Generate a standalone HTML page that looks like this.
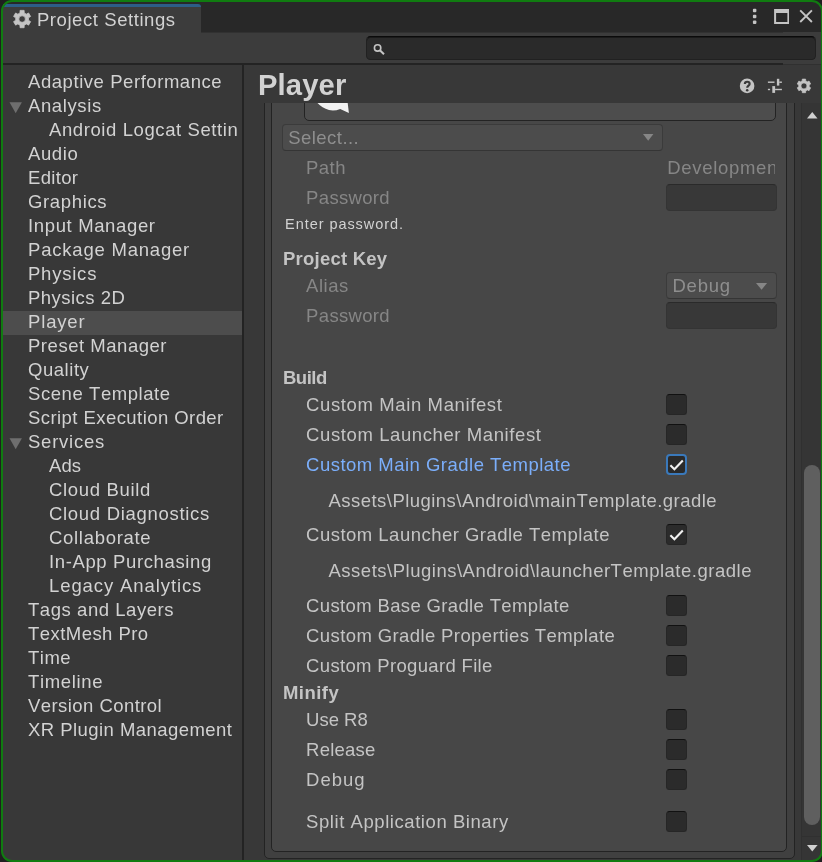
<!DOCTYPE html>
<html><head><meta charset="utf-8"><title>Project Settings</title><style>
html,body{margin:0;padding:0;width:822px;height:862px;overflow:hidden;background:#1f1f1f;}
body{font-family:"Liberation Sans",sans-serif;font-kerning:none;}
#w{position:absolute;left:1px;top:0;width:822px;height:862px;box-sizing:border-box;border-radius:11px;overflow:hidden;}
#in{will-change:transform;position:absolute;left:-1px;top:0;width:823px;height:862px;}
#bd{position:absolute;left:1px;top:0;width:822px;height:862px;box-sizing:border-box;border:2px solid #107c10;border-radius:11px;}
.t{position:absolute;height:24px;line-height:24px;white-space:pre;}
</style></head>
<body><div id="w"><div id="in">
<div style="position:absolute;left:3px;top:2px;width:818px;height:30px;background:#282828;"></div>
<div style="position:absolute;left:3px;top:32px;width:818px;height:33px;background:#3c3c3c;"></div>
<div style="position:absolute;left:201px;top:32px;width:582px;height:1px;background:#313131;"></div>
<div style="position:absolute;left:3px;top:4px;width:198px;height:29px;background:#3c3c3c;border-top:3px solid #2c5d87;box-sizing:border-box;border-top-right-radius:3px;"></div>
<div style="position:absolute;left:3px;top:63px;width:780px;height:2px;background:#232323;"></div>
<div style="position:absolute;left:783px;top:64px;width:38px;height:1px;background:#303030;"></div>
<div style="position:absolute;left:366px;top:36px;width:450px;height:24px;background:#2a2a2a;box-sizing:border-box;border:1px solid #212121;border-top-color:#0a0a0a;border-radius:4.5px;box-shadow:inset 0 1px 0 #1a1a1a;"></div>
<div style="position:absolute;left:3px;top:65px;width:239px;height:795px;background:#383838;"></div>
<div style="position:absolute;left:3px;top:311px;width:239px;height:24px;background:#4d4d4d;"></div>
<div style="position:absolute;left:242px;top:65px;width:2px;height:795px;background:#232323;"></div>
<div style="position:absolute;left:244px;top:65px;width:577px;height:795px;background:#383838;"></div>
<div style="position:absolute;left:244px;top:103px;width:557px;height:757px;overflow:hidden"><div style="position:absolute;left:20px;top:-20px;width:531px;height:776px;background:#404040;box-sizing:border-box;border:1px solid #232323;border-radius:5px;"></div><div style="position:absolute;left:27px;top:-20px;width:516px;height:769px;background:#474747;box-sizing:border-box;border:1px solid #232323;border-radius:5px;"></div><div style="position:absolute;left:60px;top:-20px;width:472px;height:38px;background:#4d4d4d;box-sizing:border-box;border:1px solid #232323;border-radius:5px;"></div></div>
<div style="position:absolute;left:801px;top:103px;width:20px;height:757px;background:#353535;"></div>
<div style="position:absolute;left:804px;top:465px;width:16px;height:360px;background:#5f5f5f;border-radius:8px;"></div>
<div style="position:absolute;left:801px;top:103px;width:1px;height:757px;background:#303030;"></div>
<div style="position:absolute;left:802px;top:836px;width:19px;height:1px;background:#303030;"></div>
<div style="position:absolute;left:282px;top:124px;width:381px;height:27px;background:#4c4c4c;box-sizing:border-box;border:1px solid #3b3b3b;border-bottom-color:#353535;border-radius:4px;"></div>
<div style="position:absolute;left:666px;top:184px;width:111px;height:27px;background:#383838;box-sizing:border-box;border:1px solid #343434;border-top-color:#2a2a2a;border-radius:4px;"></div>
<div style="position:absolute;left:666px;top:272px;width:111px;height:27px;background:#4c4c4c;box-sizing:border-box;border:1px solid #3b3b3b;border-bottom-color:#353535;border-radius:4px;"></div>
<div style="position:absolute;left:666px;top:302px;width:111px;height:27px;background:#383838;box-sizing:border-box;border:1px solid #343434;border-top-color:#2a2a2a;border-radius:4px;"></div>
<div style="position:absolute;left:666px;top:394px;width:21px;height:21px;background:#2b2b2b;box-sizing:border-box;border:1px solid #262626;border-top:1.5px solid #111;border-radius:3.5px;"></div>
<div style="position:absolute;left:666px;top:424px;width:21px;height:21px;background:#2b2b2b;box-sizing:border-box;border:1px solid #262626;border-top:1.5px solid #111;border-radius:3.5px;"></div>
<div style="position:absolute;left:666px;top:454px;width:21px;height:21px;background:#2a2a2a;box-sizing:border-box;border:2px solid #3a79bb;border-radius:4px;"></div>
<svg style="position:absolute;left:666px;top:454px" width="21" height="21" viewBox="0 0 21 21"><path d="M4.4 11.2 L8.4 15.2 L16.8 6.5" fill="none" stroke="#f0f0f0" stroke-width="2.1"/></svg>
<div style="position:absolute;left:666px;top:524px;width:21px;height:21px;background:#2b2b2b;box-sizing:border-box;border:1px solid #262626;border-top:1.5px solid #111;border-radius:3.5px;"></div>
<svg style="position:absolute;left:666px;top:524px" width="21" height="21" viewBox="0 0 21 21"><path d="M4.4 11.2 L8.4 15.2 L16.8 6.5" fill="none" stroke="#f0f0f0" stroke-width="2.1"/></svg>
<div style="position:absolute;left:666px;top:595px;width:21px;height:21px;background:#2b2b2b;box-sizing:border-box;border:1px solid #262626;border-top:1.5px solid #111;border-radius:3.5px;"></div>
<div style="position:absolute;left:666px;top:625px;width:21px;height:21px;background:#2b2b2b;box-sizing:border-box;border:1px solid #262626;border-top:1.5px solid #111;border-radius:3.5px;"></div>
<div style="position:absolute;left:666px;top:655px;width:21px;height:21px;background:#2b2b2b;box-sizing:border-box;border:1px solid #262626;border-top:1.5px solid #111;border-radius:3.5px;"></div>
<div style="position:absolute;left:666px;top:709px;width:21px;height:21px;background:#2b2b2b;box-sizing:border-box;border:1px solid #262626;border-top:1.5px solid #111;border-radius:3.5px;"></div>
<div style="position:absolute;left:666px;top:739px;width:21px;height:21px;background:#2b2b2b;box-sizing:border-box;border:1px solid #262626;border-top:1.5px solid #111;border-radius:3.5px;"></div>
<div style="position:absolute;left:666px;top:769px;width:21px;height:21px;background:#2b2b2b;box-sizing:border-box;border:1px solid #262626;border-top:1.5px solid #111;border-radius:3.5px;"></div>
<div style="position:absolute;left:666px;top:811px;width:21px;height:21px;background:#2b2b2b;box-sizing:border-box;border:1px solid #262626;border-top:1.5px solid #111;border-radius:3.5px;"></div>
<div class="t" style="left:36.90px;top:8.29px;font-size:18.5px;letter-spacing:0.576px;color:#d2d2d2;">Project Settings</div>
<div class="t" style="left:28.00px;top:70.39px;font-size:18.5px;letter-spacing:0.559px;color:#d2d2d2;">Adaptive Performance</div>
<div class="t" style="left:28.00px;top:94.39px;font-size:18.5px;letter-spacing:0.607px;color:#d2d2d2;">Analysis</div>
<div class="t" style="left:49px;top:118.39px;width:189px;overflow:hidden;font-size:18.5px;letter-spacing:0.594px;color:#d2d2d2;text-indent:0.00px;">Android Logcat Settings</div>
<div class="t" style="left:28.00px;top:142.39px;font-size:18.5px;letter-spacing:0.591px;color:#d2d2d2;">Audio</div>
<div class="t" style="left:28.00px;top:166.39px;font-size:18.5px;letter-spacing:0.338px;color:#d2d2d2;">Editor</div>
<div class="t" style="left:28.00px;top:190.39px;font-size:18.5px;letter-spacing:0.650px;color:#d2d2d2;">Graphics</div>
<div class="t" style="left:28.00px;top:214.39px;font-size:18.5px;letter-spacing:0.641px;color:#d2d2d2;">Input Manager</div>
<div class="t" style="left:28.00px;top:238.39px;font-size:18.5px;letter-spacing:0.795px;color:#d2d2d2;">Package Manager</div>
<div class="t" style="left:28.00px;top:262.39px;font-size:18.5px;letter-spacing:0.775px;color:#d2d2d2;">Physics</div>
<div class="t" style="left:28.00px;top:286.39px;font-size:18.5px;letter-spacing:0.469px;color:#d2d2d2;">Physics 2D</div>
<div class="t" style="left:28.00px;top:310.39px;font-size:18.5px;letter-spacing:0.838px;color:#d2d2d2;">Player</div>
<div class="t" style="left:28.00px;top:334.39px;font-size:18.5px;letter-spacing:0.531px;color:#d2d2d2;">Preset Manager</div>
<div class="t" style="left:28.00px;top:358.39px;font-size:18.5px;letter-spacing:0.543px;color:#d2d2d2;">Quality</div>
<div class="t" style="left:28.00px;top:382.39px;font-size:18.5px;letter-spacing:0.570px;color:#d2d2d2;">Scene Template</div>
<div class="t" style="left:28.00px;top:406.39px;font-size:18.5px;letter-spacing:0.435px;color:#d2d2d2;">Script Execution Order</div>
<div class="t" style="left:28.00px;top:430.39px;font-size:18.5px;letter-spacing:0.750px;color:#d2d2d2;">Services</div>
<div class="t" style="left:49.00px;top:454.39px;font-size:18.5px;letter-spacing:0.075px;color:#d2d2d2;">Ads</div>
<div class="t" style="left:49.00px;top:478.39px;font-size:18.5px;letter-spacing:0.673px;color:#d2d2d2;">Cloud Build</div>
<div class="t" style="left:49.00px;top:502.39px;font-size:18.5px;letter-spacing:0.697px;color:#d2d2d2;">Cloud Diagnostics</div>
<div class="t" style="left:49.00px;top:526.39px;font-size:18.5px;letter-spacing:0.702px;color:#d2d2d2;">Collaborate</div>
<div class="t" style="left:49.00px;top:550.39px;font-size:18.5px;letter-spacing:0.627px;color:#d2d2d2;">In-App Purchasing</div>
<div class="t" style="left:49.00px;top:574.39px;font-size:18.5px;letter-spacing:0.903px;color:#d2d2d2;">Legacy Analytics</div>
<div class="t" style="left:28.00px;top:598.39px;font-size:18.5px;letter-spacing:0.554px;color:#d2d2d2;">Tags and Layers</div>
<div class="t" style="left:28.00px;top:622.39px;font-size:18.5px;letter-spacing:0.454px;color:#d2d2d2;">TextMesh Pro</div>
<div class="t" style="left:28.00px;top:646.39px;font-size:18.5px;letter-spacing:0.507px;color:#d2d2d2;">Time</div>
<div class="t" style="left:28.00px;top:670.39px;font-size:18.5px;letter-spacing:0.659px;color:#d2d2d2;">Timeline</div>
<div class="t" style="left:28.00px;top:694.39px;font-size:18.5px;letter-spacing:0.441px;color:#d2d2d2;">Version Control</div>
<div class="t" style="left:28.00px;top:718.39px;font-size:18.5px;letter-spacing:0.450px;color:#d2d2d2;">XR Plugin Management</div>
<div class="t" style="left:258.00px;top:72.68px;font-size:29.2px;letter-spacing:0.130px;color:#d2d2d2;font-weight:700;">Player</div>
<div class="t" style="left:288.20px;top:126.29px;font-size:18.5px;letter-spacing:0.465px;color:#8e8e8e;">Select...</div>
<div class="t" style="left:306.10px;top:156.29px;font-size:18.5px;letter-spacing:0.439px;color:#868686;">Path</div>
<div class="t" style="left:660px;top:156.29px;width:115px;overflow:hidden;font-size:18.5px;letter-spacing:0.677px;color:#868686;text-indent:7.30px;">Development Keystore</div>
<div class="t" style="left:306.10px;top:186.09px;font-size:18.5px;letter-spacing:0.332px;color:#868686;">Password</div>
<div class="t" style="left:285.10px;top:212.48px;font-size:14.5px;letter-spacing:0.935px;color:#d2d2d2;">Enter password.</div>
<div class="t" style="left:283.00px;top:246.69px;font-size:18.5px;letter-spacing:0.236px;color:#c4c4c4;font-weight:700;">Project Key</div>
<div class="t" style="left:306.10px;top:273.69px;font-size:18.5px;letter-spacing:0.537px;color:#868686;">Alias</div>
<div class="t" style="left:672.50px;top:273.69px;font-size:18.5px;letter-spacing:0.757px;color:#8e8e8e;">Debug</div>
<div class="t" style="left:306.10px;top:304.49px;font-size:18.5px;letter-spacing:0.332px;color:#868686;">Password</div>
<div class="t" style="left:283.00px;top:366.49px;font-size:18.5px;letter-spacing:-0.488px;color:#c4c4c4;font-weight:700;">Build</div>
<div class="t" style="left:306.10px;top:393.29px;font-size:18.5px;letter-spacing:0.617px;color:#c4c4c4;">Custom Main Manifest</div>
<div class="t" style="left:306.10px;top:423.29px;font-size:18.5px;letter-spacing:0.597px;color:#c4c4c4;">Custom Launcher Manifest</div>
<div class="t" style="left:306.10px;top:453.09px;font-size:18.5px;letter-spacing:0.481px;color:#7baefa;">Custom Main Gradle Template</div>
<div class="t" style="left:328.50px;top:489.09px;font-size:18.5px;letter-spacing:0.461px;color:#c4c4c4;">Assets\Plugins\Android\mainTemplate.gradle</div>
<div class="t" style="left:306.10px;top:523.29px;font-size:18.5px;letter-spacing:0.481px;color:#c4c4c4;">Custom Launcher Gradle Template</div>
<div class="t" style="left:328.50px;top:559.19px;font-size:18.5px;letter-spacing:0.509px;color:#c4c4c4;">Assets\Plugins\Android\launcherTemplate.gradle</div>
<div class="t" style="left:306.10px;top:594.49px;font-size:18.5px;letter-spacing:0.355px;color:#c4c4c4;">Custom Base Gradle Template</div>
<div class="t" style="left:306.10px;top:624.29px;font-size:18.5px;letter-spacing:0.391px;color:#c4c4c4;">Custom Gradle Properties Template</div>
<div class="t" style="left:306.10px;top:654.29px;font-size:18.5px;letter-spacing:0.333px;color:#c4c4c4;">Custom Proguard File</div>
<div class="t" style="left:283.00px;top:681.19px;font-size:18.5px;letter-spacing:0.456px;color:#c4c4c4;font-weight:700;">Minify</div>
<div class="t" style="left:306.10px;top:708.19px;font-size:18.5px;letter-spacing:-0.017px;color:#c4c4c4;">Use R8</div>
<div class="t" style="left:306.10px;top:738.49px;font-size:18.5px;letter-spacing:0.203px;color:#c4c4c4;">Release</div>
<div class="t" style="left:306.10px;top:768.49px;font-size:18.5px;letter-spacing:0.982px;color:#c4c4c4;">Debug</div>
<div class="t" style="left:306.10px;top:810.49px;font-size:18.5px;letter-spacing:0.559px;color:#c4c4c4;">Split Application Binary</div>
<svg style="position:absolute;left:9px;top:102px" width="13" height="12" viewBox="0 0 13 12"><path d="M0.5 0.3 L12.9 0.3 L6.7 11.3 Z" fill="#6e6e6e"/></svg>
<svg style="position:absolute;left:9px;top:438px" width="13" height="12" viewBox="0 0 13 12"><path d="M0.5 0.3 L12.9 0.3 L6.7 11.3 Z" fill="#6e6e6e"/></svg>
<svg style="position:absolute;left:643px;top:133.5px" width="11" height="7" viewBox="0 0 11 7"><path d="M0 0 L10.4 0 L5.2 6.8 Z" fill="#868686"/></svg>
<svg style="position:absolute;left:756.4px;top:282.8px" width="12" height="7" viewBox="0 0 12 7"><path d="M0 0 L11.1 0 L5.55 6.8 Z" fill="#868686"/></svg>
<svg style="position:absolute;left:806.6px;top:111.5px" width="11" height="7" viewBox="0 0 11 7"><path d="M0 6.6 L10.5 6.6 L5.25 0 Z" fill="#d0d0d0"/></svg>
<svg style="position:absolute;left:806.6px;top:845px" width="11" height="7" viewBox="0 0 11 7"><path d="M0 0 L10.6 0 L5.3 6.4 Z" fill="#d0d0d0"/></svg>
<svg style="position:absolute;left:0;top:0" width="822" height="130" viewBox="0 0 822 130">
<path d="M24.21 12.90 L24.13 10.38 L20.07 10.38 L19.99 12.90 L17.83 14.15 L15.61 12.96 L13.58 16.47 L15.72 17.80 L15.72 20.30 L13.58 21.63 L15.61 25.14 L17.83 23.95 L19.99 25.20 L20.07 27.72 L24.13 27.72 L24.21 25.20 L26.37 23.95 L28.59 25.14 L30.62 21.63 L28.48 20.30 L28.48 17.80 L30.62 16.47 L28.59 12.96 L26.37 14.15 Z M18.80 19.05 a3.30 3.30 0 1 0 6.60 0 a3.30 3.30 0 1 0 -6.60 0 Z" fill="#c4c4c4" fill-rule="evenodd" stroke="#c4c4c4" stroke-width="0.8" stroke-linejoin="round"/>
<path d="M805.72 80.90 L805.61 79.10 L802.29 79.10 L802.18 80.90 L800.51 81.87 L798.89 81.06 L797.23 83.94 L798.74 84.93 L798.74 86.87 L797.23 87.86 L798.89 90.74 L800.51 89.93 L802.18 90.90 L802.29 92.70 L805.61 92.70 L805.72 90.90 L807.39 89.93 L809.01 90.74 L810.67 87.86 L809.16 86.87 L809.16 84.93 L810.67 83.94 L809.01 81.06 L807.39 81.87 Z M800.95 85.90 a3.00 3.00 0 1 0 6.00 0 a3.00 3.00 0 1 0 -6.00 0 Z" fill="#c4c4c4" fill-rule="evenodd" stroke="#c4c4c4" stroke-width="0.7" stroke-linejoin="round"/>
<circle cx="747.1" cy="85.9" r="7.3" fill="#c4c4c4"/>
<path d="M744.9 83.9 C744.9 81.0 749.6 81.0 749.6 83.9 C749.6 85.7 747.2 85.6 747.2 87.8" fill="none" stroke="#383838" stroke-width="2.2"/><circle cx="747.2" cy="90.2" r="1.25" fill="#383838"/>
<rect x="767.9" y="81.5" width="6.6" height="1.4" fill="#c4c4c4"/><rect x="776.9" y="78.8" width="2.4" height="6.8" fill="#c4c4c4"/><rect x="779.3" y="81.5" width="2.6" height="1.4" fill="#c4c4c4"/>
<rect x="767.9" y="88.8" width="2.2" height="1.4" fill="#c4c4c4"/><rect x="772.3" y="86.1" width="2.8" height="6.8" fill="#c4c4c4"/><rect x="775.1" y="88.8" width="6.8" height="1.4" fill="#c4c4c4"/>
<rect x="752.9" y="8.85" width="3.5" height="3.5" rx="1" fill="#c4c4c4"/>
<rect x="752.9" y="14.649999999999999" width="3.5" height="3.5" rx="1" fill="#c4c4c4"/>
<rect x="752.9" y="20.45" width="3.5" height="3.5" rx="1" fill="#c4c4c4"/>
<path d="M774.1 9 H789 V23.9 H774.1 Z M776.1 13 V21.9 H787.4 V13 Z" fill="#c4c4c4" fill-rule="evenodd"/>
<path d="M800.2 10.3 L811.9 22 M811.9 10.3 L800.2 22" stroke="#c4c4c4" stroke-width="1.9" fill="none"/>
<circle cx="377.6" cy="47.9" r="3.2" fill="none" stroke="#c4c4c4" stroke-width="1.6"/><path d="M379.9 50.2 L384 54.3" stroke="#c4c4c4" stroke-width="2" fill="none"/>
<path d="M317.5 103 Q322 108 329 110 Q334.5 111.3 340.2 108.9 L348.9 112.9 L347.7 103 Z" fill="#f2f2f2"/>
</svg>
</div></div><div id="bd"></div></body></html>
